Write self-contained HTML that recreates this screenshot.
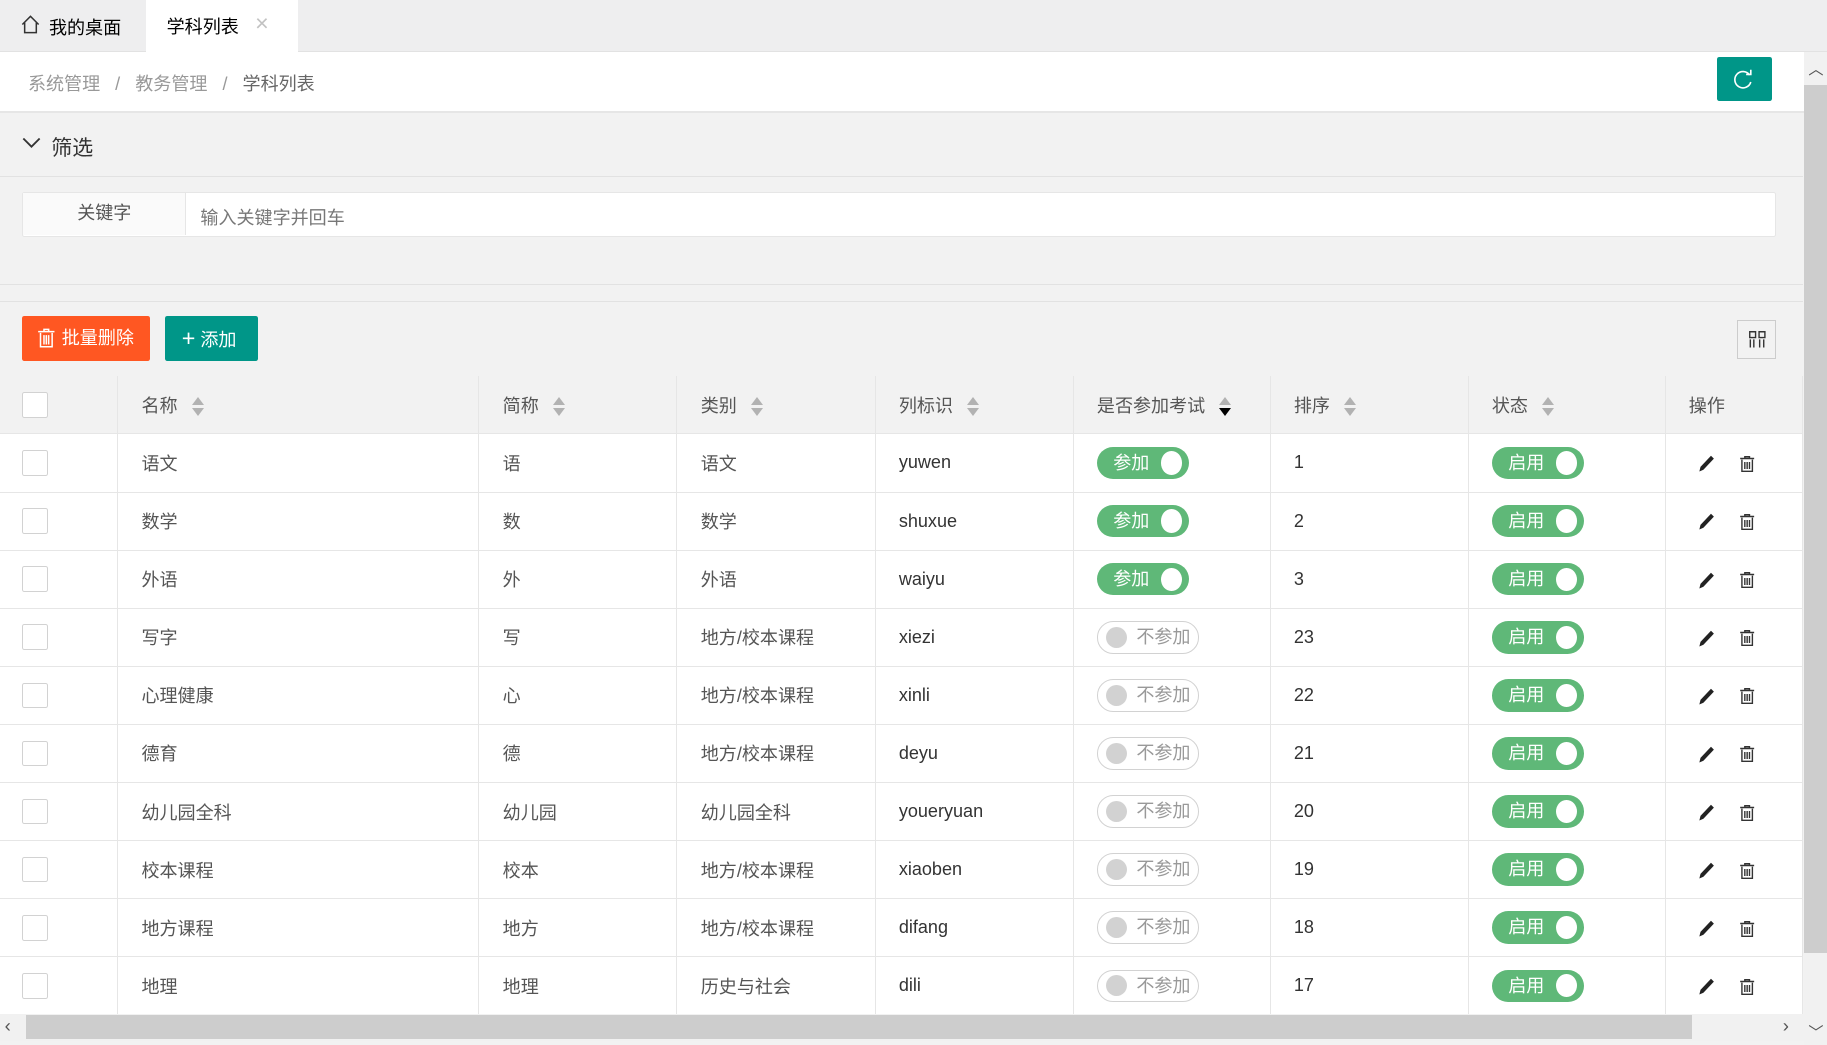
<!DOCTYPE html>
<html><head><meta charset="utf-8"><style>
html{zoom:1.16518}
body{margin:0;width:1568px;height:897px;overflow:hidden;position:relative;background:#f2f2f2;font-family:"Liberation Sans","Noto Sans CJK SC",sans-serif;font-size:15.5px;color:#333}
.abs{position:absolute}
.tabs{left:0;top:0;width:1568px;height:44px;background:#eeeeef;border-bottom:1px solid #e2e2e2}
.bc{left:0;top:45px;width:1548px;height:50px;background:#fff;border-bottom:2px solid #e6e6e6}
table{border-collapse:collapse;position:absolute;left:0;top:323px;width:1547px;table-layout:fixed}
td,th{height:49px;border-bottom:1px solid #e6e6e6;border-right:1px solid #e6e6e6;padding:0 0 0 20px;text-align:left;font-weight:normal;color:#555;font-size:15.5px;white-space:nowrap;overflow:hidden}
th{background:#f2f2f2;color:#555}
td{background:#fff}
td:first-child,th:first-child{padding-left:19px;box-shadow:2px 0 4px rgba(0,0,0,.06)}
.cb{width:22px;height:22px;border:1px solid #d2d2d2;border-radius:2px;background:#fff;box-sizing:border-box}
.sort{display:inline-block;vertical-align:middle;margin-left:12px;width:12px;height:17px;position:relative}
.sort:before{content:"";position:absolute;left:0;top:0;border:6px solid transparent;border-bottom:7px solid #b2b2b2;border-top:0}
.sort:after{content:"";position:absolute;left:0;top:9px;border:6px solid transparent;border-top:7px solid #b2b2b2;border-bottom:0}
.sort.d:after{border-top-color:#000}
.on{display:inline-block;height:28px;width:79px;border-radius:14px;background:#5fb878;color:#fff;position:relative;box-sizing:border-box;padding-left:14px;line-height:28px;font-size:15.5px;vertical-align:middle}
.on:after{content:"";position:absolute;right:6px;top:4px;width:18px;height:20px;border-radius:50%;background:#fff}
.off{display:inline-block;height:28px;width:88px;border-radius:14px;border:1px solid #d2d2d2;background:#fff;color:#999;position:relative;box-sizing:border-box;padding-left:33px;line-height:26px;vertical-align:middle}
.off:before{content:"";position:absolute;left:7px;top:4px;width:18px;height:18px;border-radius:50%;background:#d2d2d2}
.ops svg{vertical-align:middle}
</style></head><body>
<div class="abs tabs"></div>
<svg class="abs" style="left:17px;top:12px" width="18" height="18" viewBox="0 0 18 18"><path d="M2 9 L9 2 L16 9 M4 7.5 V16 H14 V7.5" fill="none" stroke="#333" stroke-width="1.3"/></svg>
<div class="abs" style="left:42px;top:12px;color:#000">我的桌面</div>
<div class="abs" style="left:125px;top:0;width:131px;height:45px;background:#fff"></div>
<div class="abs" style="left:143px;top:11px;color:#000">学科列表</div>
<div class="abs" style="left:219px;top:9px;color:#c2c2c2;font-size:20px">×</div>
<div class="abs bc"></div>
<div class="abs" style="left:24px;top:60px;color:#999">系统管理 &nbsp;&nbsp;/&nbsp;&nbsp; 教务管理 &nbsp;&nbsp;/&nbsp;&nbsp; <span style="color:#666">学科列表</span></div>
<div class="abs" style="left:1474px;top:49px;width:47px;height:38px;background:#009688;border-radius:2px"></div>
<svg class="abs" style="left:1486px;top:58px" width="22" height="20" viewBox="0 0 22 20"><path d="M16 6 A7 7 0 1 0 17 12" fill="none" stroke="#fff" stroke-width="1.4"/><path d="M13 5.5 H17 V1.5" fill="none" stroke="#fff" stroke-width="1.4"/></svg>
<svg class="abs" style="left:18px;top:116px" width="18" height="14"><path d="M2 3 L9 10 L16 3" fill="none" stroke="#333" stroke-width="1.6"/></svg>
<div class="abs" style="left:44px;top:113px;font-size:18px">筛选</div>
<div class="abs" style="left:0;top:151px;width:1547px;border-top:1px solid #e2e2e2"></div>
<div class="abs" style="left:19px;top:165px;width:1505px;height:38px;background:#fff;border:1px solid #e6e6e6;border-radius:2px;box-sizing:border-box"></div>
<div class="abs" style="left:20px;top:166px;width:139px;height:36px;background:#fafafa;border-right:1px solid #e6e6e6;text-align:center;line-height:36px;color:#555">关键字</div>
<div class="abs" style="left:172px;top:175px;color:#777">输入关键字并回车</div>
<div class="abs" style="left:0;top:244px;width:1547px;border-top:1px solid #e2e2e2"></div>
<div class="abs" style="left:0;top:258px;width:1547px;border-top:1px solid #e2e2e2"></div>
<div class="abs" style="left:19px;top:271px;width:110px;height:39px;background:#ff5722;border-radius:2px;color:#fff;line-height:39px;box-sizing:border-box;padding-left:34px">批量删除</div>
<svg class="abs" style="left:32px;top:281px" width="16" height="19" viewBox="0 0 16 19"><path d="M1 4 H15 M6 4 V2 H10 V4 M3 5 V17 H13 V5 M6 7 V15 M8 7 V15 M10 7 V15" fill="none" stroke="#fff" stroke-width="1.3"/></svg>
<div class="abs" style="left:142px;top:271px;width:79px;height:39px;background:#009688;border-radius:2px;color:#fff;line-height:39px;box-sizing:border-box;padding-left:14px"><span style="font-size:20px">+</span> 添加</div>
<div class="abs" style="left:1491px;top:275px;width:33px;height:33px;border:1px solid #ccc;box-sizing:border-box"></div>
<svg class="abs" style="left:1500px;top:283px" width="16" height="16" viewBox="0 0 16 16"><path d="M1.5 1.5h5v5h-5zM9.5 1.5h5v5h-5zM2 8v7M5 8v7M10 8v7M13.5 8v7" fill="none" stroke="#333" stroke-width="1.2"/></svg>
<table>
<colgroup><col style="width:101px"><col style="width:310px"><col style="width:170px"><col style="width:170px"><col style="width:170px"><col style="width:169px"><col style="width:170px"><col style="width:169px"><col></colgroup>
<tr><th><div class="cb"></div></th><th>名称<span class="sort"></span></th><th>简称<span class="sort"></span></th><th>类别<span class="sort"></span></th><th>列标识<span class="sort"></span></th><th>是否参加考试<span class="sort d"></span></th><th>排序<span class="sort"></span></th><th>状态<span class="sort"></span></th><th>操作</th></tr>
<tbody id="tb"></tbody>
</table>
<script>
var rows=[["语文","语","语文","yuwen",1,"1"],["数学","数","数学","shuxue",1,"2"],["外语","外","外语","waiyu",1,"3"],["写字","写","地方/校本课程","xiezi",0,"23"],["心理健康","心","地方/校本课程","xinli",0,"22"],["德育","德","地方/校本课程","deyu",0,"21"],["幼儿园全科","幼儿园","幼儿园全科","youeryuan",0,"20"],["校本课程","校本","地方/校本课程","xiaoben",0,"19"],["地方课程","地方","地方/校本课程","difang",0,"18"],["地理","地理","历史与社会","dili",0,"17"]];
var pen='<svg width="16" height="16" viewBox="0 0 16 16"><path d="M2 15 L3 11 L12 1.5 L14.5 4 L5.5 13.5 Z" fill="#222"/></svg>';
var bin='<svg width="14" height="15" viewBox="0 0 14 15"><path d="M1 3H13M5 3V1.5H9V3M2.5 4V14H11.5V4M5 6V12M7 6V12M9 6V12" fill="none" stroke="#333" stroke-width="1.2"/></svg>';
var h="";rows.forEach(function(r){h+='<tr><td><div class="cb"></div></td><td>'+r[0]+'</td><td>'+r[1]+'</td><td>'+r[2]+'</td><td style="color:#333">'+r[3]+'</td><td>'+(r[4]?'<span class="on">参加</span>':'<span class="off">不参加</span>')+'</td><td style="color:#333">'+r[5]+'</td><td><span class="on">启用</span></td><td class="ops" style="padding-left:27px">'+pen+'<span style="display:inline-block;width:20px"></span>'+bin+'</td></tr>'});
document.getElementById('tb').innerHTML=h;
</script>
<div class="abs" style="left:0;top:870px;width:1548px;height:23px;background:#f1f1f1"></div>
<div class="abs" style="left:22px;top:871px;width:1430px;height:21px;background:#cdcdcd"></div>
<div class="abs" style="left:4px;top:871px;color:#555;font-size:16px">‹</div>
<div class="abs" style="left:1530px;top:871px;color:#555;font-size:16px">›</div>
<div class="abs" style="left:1548px;top:45px;width:20px;height:852px;background:#f1f1f1"></div>
<div class="abs" style="left:1548px;top:73px;width:20px;height:745px;background:#cdcdcd"></div>
<div class="abs" style="left:1552px;top:49px;color:#555;font-size:13px">︿</div>
<div class="abs" style="left:1552px;top:876px;color:#555;font-size:13px">﹀</div>
</body></html>
